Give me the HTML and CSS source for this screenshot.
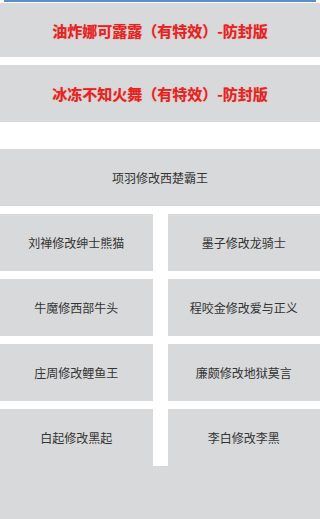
FILE: index.html
```html
<!DOCTYPE html>
<html lang="zh-CN">
<head>
<meta charset="utf-8">
<title>修改</title>
<link rel="stylesheet" href="styles.css">
</head>
<body>
<div class="topbar"></div>
<div class="btn btn-red first">油炸娜可露露（有特效）-防封版</div>
<div class="btn btn-red second">冰冻不知火舞（有特效）-防封版</div>
<div class="btn btn-gray wide">项羽修改西楚霸王</div>
<div class="grid">
  <div class="btn btn-gray">刘禅修改绅士熊猫</div>
  <div class="btn btn-gray">墨子修改龙骑士</div>
  <div class="btn btn-gray">牛魔修西部牛头</div>
  <div class="btn btn-gray">程咬金修改爱与正义</div>
  <div class="btn btn-gray">庄周修改鲤鱼王</div>
  <div class="btn btn-gray">廉颇修改地狱莫言</div>
  <div class="btn btn-gray">白起修改黑起</div>
  <div class="btn btn-gray">李白修改李黑</div>
</div>
<div class="footer"></div>
</body>
</html>
```

FILE: styles.css
```css
html, body {
  margin: 0;
  padding: 0;
  background: #ffffff;
  font-family: "Noto Sans CJK SC", "Noto Sans", sans-serif;
}
.topbar {
  height: 2px;
  margin: 0 4px 1px;
  background: #5a8fcc;
}
.btn {
  display: flex;
  align-items: center;
  justify-content: center;
  background: #d8d9da;
  height: 57px;
}
.btn-red {
  color: #e6231e;
  font-weight: 700;
  font-size: 15px;
  text-shadow: 0 0 1px rgba(240, 60, 60, 0.6);
}
.first {
  height: 54px;
  margin-bottom: 8px;
}
.second {
  margin-bottom: 27px;
}
.btn-gray {
  color: #333333;
  font-size: 12px;
}
.wide {
  margin-bottom: 8px;
}
.grid {
  display: grid;
  grid-template-columns: 1fr 1fr;
  grid-auto-rows: 57px;
  column-gap: 15px;
  row-gap: 8px;
}
.footer {
  height: 60px;
  background: #d8d9da;
}
```
